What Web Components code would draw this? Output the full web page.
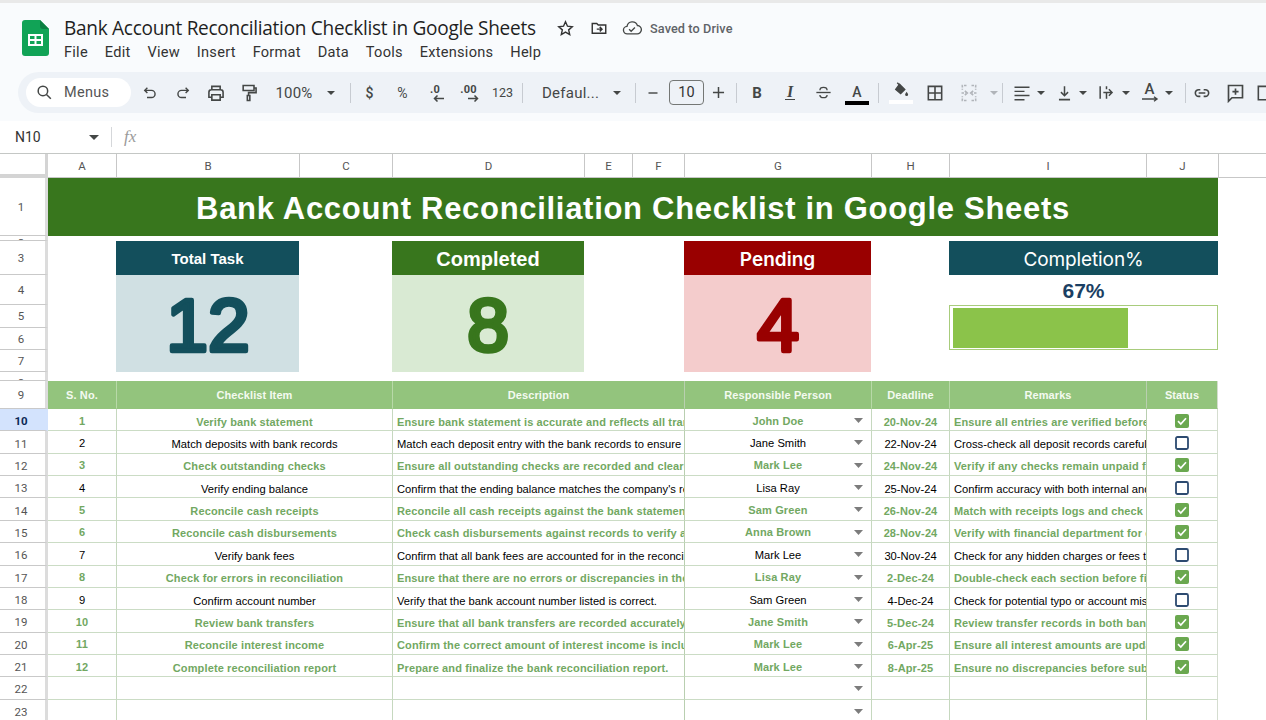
<!DOCTYPE html>
<html lang="en"><head><meta charset="utf-8"><title>Bank Account Reconciliation Checklist in Google Sheets</title>
<style>
html,body{margin:0;padding:0;height:720px;overflow:hidden;background:#fff}
gs-app{font-family:"Roboto","Liberation Sans",sans-serif}
</style></head><body>
<gs-app>
  <gs-header title-text="Bank Account Reconciliation Checklist in Google Sheets"></gs-header>
  <gs-toolbar></gs-toolbar>
  <gs-formula cell="N10"></gs-formula>
  <gs-sheet>
    <gs-banner>Bank Account Reconciliation Checklist in Google Sheets</gs-banner>
    <gs-kpi col="3" label="Total Task" value="12" tone="teal"></gs-kpi>
    <gs-kpi col="5" label="Completed" value="8" tone="green"></gs-kpi>
    <gs-kpi col="8" label="Pending" value="4" tone="red"></gs-kpi>
    <gs-progress label="Completion%" pct="67"></gs-progress>
    <gs-task row="9" head n="S. No." item="Checklist Item" desc="Description" who="Responsible Person" due="Deadline" note="Remarks" status="Status"></gs-task>
    <gs-task row="10" done n="1" item="Verify bank statement" desc="Ensure bank statement is accurate and reflects all tran" who="John Doe" due="20-Nov-24" note="Ensure all entries are verified before"></gs-task>
    <gs-task row="11" n="2" item="Match deposits with bank records" desc="Match each deposit entry with the bank records to ensure a" who="Jane Smith" due="22-Nov-24" note="Cross-check all deposit records careful"></gs-task>
    <gs-task row="12" done n="3" item="Check outstanding checks" desc="Ensure all outstanding checks are recorded and cleare" who="Mark Lee" due="24-Nov-24" note="Verify if any checks remain unpaid fo"></gs-task>
    <gs-task row="13" n="4" item="Verify ending balance" desc="Confirm that the ending balance matches the company's re" who="Lisa Ray" due="25-Nov-24" note="Confirm accuracy with both internal and"></gs-task>
    <gs-task row="14" done n="5" item="Reconcile cash receipts" desc="Reconcile all cash receipts against the bank statement" who="Sam Green" due="26-Nov-24" note="Match with receipts logs and check f"></gs-task>
    <gs-task row="15" done n="6" item="Reconcile cash disbursements" desc="Check cash disbursements against records to verify ac" who="Anna Brown" due="28-Nov-24" note="Verify with financial department for d"></gs-task>
    <gs-task row="16" n="7" item="Verify bank fees" desc="Confirm that all bank fees are accounted for in the reconcil" who="Mark Lee" due="30-Nov-24" note="Check for any hidden charges or fees t"></gs-task>
    <gs-task row="17" done n="8" item="Check for errors in reconciliation" desc="Ensure that there are no errors or discrepancies in the" who="Lisa Ray" due="2-Dec-24" note="Double-check each section before fi"></gs-task>
    <gs-task row="18" n="9" item="Confirm account number" desc="Verify that the bank account number listed is correct." who="Sam Green" due="4-Dec-24" note="Check for potential typo or account mis"></gs-task>
    <gs-task row="19" done n="10" item="Review bank transfers" desc="Ensure that all bank transfers are recorded accurately." who="Jane Smith" due="5-Dec-24" note="Review transfer records in both ban"></gs-task>
    <gs-task row="20" done n="11" item="Reconcile interest income" desc="Confirm the correct amount of interest income is inclu" who="Mark Lee" due="6-Apr-25" note="Ensure all interest amounts are upda"></gs-task>
    <gs-task row="21" done n="12" item="Complete reconciliation report" desc="Prepare and finalize the bank reconciliation report." who="Mark Lee" due="8-Apr-25" note="Ensure no discrepancies before sub"></gs-task>
    <gs-task row="22" blank></gs-task>
    <gs-task row="23" blank></gs-task>
  </gs-sheet>
</gs-app>
<script>
const I = (body, s=18, extra='') => `<svg width="${s}" height="${s}" viewBox="0 0 24 24" fill="none" stroke="#444746" stroke-width="1.9" ${extra}>${body}</svg>`;

class GsApp extends HTMLElement{constructor(){super();this.attachShadow({mode:'open'}).innerHTML=`<style>
:host{display:flex;flex-direction:column;width:1266px;height:720px;overflow:hidden;background:#fff}
</style><slot></slot>`}}

class GsHeader extends HTMLElement{connectedCallback(){
 const menus=['File','Edit','View','Insert','Format','Data','Tools','Extensions','Help'];
 this.attachShadow({mode:'open'}).innerHTML=`<style>
 :host{display:flex;height:72px;flex:none;box-sizing:border-box;background:#f9fbfd;border-top:3px solid #e9e9e9;padding:17px 0 0 22px;color:#1f1f1f}
 .logo{width:27px;height:36px;flex:none}
 .main{margin-left:15px;display:flex;flex-direction:column;margin-top:-5px}
 .top{display:flex;align-items:center;height:26px}
 h1{margin:0;font:400 19.05px/26px "Open Sans","Roboto",sans-serif;letter-spacing:-.28px;white-space:nowrap;width:472px}
 .ic{display:flex;margin-left:15px}
 .saved{margin-left:8px;font:500 12.7px "Roboto",sans-serif;color:#5f6368;letter-spacing:.1px;white-space:nowrap}
 nav{display:flex;gap:16.9px;font:400 14.6px/20px "Roboto",sans-serif;color:#333;margin-top:1px;letter-spacing:.25px}
 </style>
 <svg class="logo" viewBox="0 0 27 36"><path d="M3 0h15l9 9v24a3 3 0 0 1-3 3H3a3 3 0 0 1-3-3V3a3 3 0 0 1 3-3z" fill="#11a356"/><path d="M18 0l9 9h-6a3 3 0 0 1-3-3z" fill="#0c7f42"/><path d="M7 15h13v10H7z" fill="none" stroke="#fff" stroke-width="2"/><path d="M7 20h13M13.5 15v10" stroke="#fff" stroke-width="2"/></svg>
 <div class="main"><div class="top"><h1>${this.getAttribute('title-text')}</h1>
  <span class="ic" style="margin-left:20px">${I('<path d="M12 3.5l2.5 5.6 6 .6-4.5 4 1.3 6L12 16.6 6.700 19.700l1.300-6-4.500-4 6-.6z"/>',19,'style="stroke-width:1.8"').replace('stroke="#444746"','stroke="#333"')}</span>
  <span class="ic">${I('<path d="M3 6h6l2 2h10v11H3z"/><path d="M9 13.500h7M13 10.500l3 3-3 3"/>',18).replace('stroke="#444746"','stroke="#333"')}</span>
  <span class="ic" style="margin-left:14px">${I('<path d="M6.500 19A4.500 4.500 0 0 1 6 10a6.500 6.500 0 0 1 12.500-1A5 5 0 0 1 18 19z"/><path d="M8.500 13.500l2.500 2.500 4.500-4.500"/>',20,'style="stroke-width:1.600"')}</span>
  <span class="saved">Saved to Drive</span></div>
  <nav>${menus.map(m=>`<span>${m}</span>`).join('')}</nav></div>`;
}}

class TbItem extends HTMLElement{connectedCallback(){
 this.attachShadow({mode:'open'}).innerHTML=`<style>
 :host{display:flex;align-items:center;justify-content:center;flex:none;height:41px;position:relative;color:#444746;font:400 14px "Roboto",sans-serif}
 </style><slot></slot>`;
 this.style.width=this.getAttribute('w')+'px';
}}

class GsToolbar extends HTMLElement{connectedCallback(){
 const caret='<svg width="8" height="4" viewBox="0 0 10 5" preserveAspectRatio="none"><path d="M0 0h10L5 5z" fill="#444746"/></svg>';
 const item=(w,h='',st='')=>`<tb-item w="${w}" style="${st}">${h}</tb-item>`;
 const sep=(l=0)=>`<span class="sep" style="margin-left:${l}px"></span>`;
 this.attachShadow({mode:'open'}).innerHTML=`<style>
 :host{display:block;height:49px;box-sizing:border-box;background:#f9fbfd;padding:0 0 8px 18px;overflow:hidden;flex:none}
 .pill{display:flex;align-items:center;height:41px;width:1300px;background:#eef2f7;border-radius:21px 0 0 21px}
 .menus{display:flex;align-items:center;margin-left:8px;width:105px;height:29px;background:#fff;border-radius:15px;flex:none;font:400 14.500px "Roboto",sans-serif;color:#555;letter-spacing:.3px;box-sizing:border-box;padding-left:9px;gap:10px}
 .sep{width:1px;height:20px;background:#c7cbd1;flex:none}
 .t{font:400 15px "Roboto",sans-serif;color:#444746;white-space:nowrap}
 .s{font:400 12.500px "Roboto",sans-serif;color:#444746;white-space:nowrap}
 .b{font:500 14px "Roboto",sans-serif;color:#444746}
 .col{display:flex;flex-direction:column;align-items:center;line-height:1}
 .dec{font:700 11px/11px "Roboto",sans-serif;color:#444746;letter-spacing:.2px}
 .box{width:35px;height:25px;box-sizing:border-box;border:1px solid #747775;border-radius:4px;display:flex;align-items:center;justify-content:center;font:400 14.500px "Roboto",sans-serif;color:#333}
 .bar{width:24px;height:4px;background:#000;margin-top:1px}
 .wbar{width:24px;height:4px;background:#fff;margin-top:0}
 .a{font:500 14px/15px "Roboto",sans-serif;color:#444746}
 </style><div class="pill">
 <div class="menus">${I('<circle cx="10" cy="10" r="6"/><path d="M14.500 14.500L20 20"/>',19)}<span>Menus</span></div>
 ${item(2)}
 ${item(33,I('<path d="M8.500 5L5 8.500 8.500 12"/><path d="M5 8.500h9a4.500 4.500 0 0 1 0 9.500H8"/>',18))}
 ${item(33,I('<path d="M15.500 5L19 8.500 15.500 12"/><path d="M19 8.500h-9a4.500 4.500 0 0 0 0 9.500h6"/>',18))}
 ${item(33,I('<path d="M7 8V4h10v4M7 17H3.500v-6a3 3 0 0 1 3-3h11a3 3 0 0 1 3 3v6H17M7 14h10v6.500H7z"/>',20))}
 ${item(33,I('<path d="M5 3h13v6H5zM18 6h2.500v5.500H11.500V15M10 15h3v6h-3z"/>',20))}
 ${item(58,'<span class="t" style="letter-spacing:.2px">100%</span>')}
 ${item(12,caret,'margin-left:2px')}
 ${item(13)}${sep()}
 ${item(37,'<span class="t" style="font-weight:500;font-size:14px">$</span>')}
 ${item(29,'<span class="s" style="font-size:14px">%</span>')}
 ${item(36,'<span class="col"><span class="dec">.0</span><svg width="12" height="7" viewBox="0 0 12 7" style="margin-left:8px"><path d="M11 3.500H2M4.500 .5L1.500 3.500l3 3" fill="none" stroke="#444746" stroke-width="1.500"/></svg></span>')}
 ${item(31,'<span class="col"><span class="dec">.00</span><svg width="12" height="7" viewBox="0 0 12 7" style="margin-left:8px"><path d="M1 3.500h9M7.500 .5l3 3-3 3" fill="none" stroke="#444746" stroke-width="1.500"/></svg></span>')}
 ${item(37,'<span class="s">123</span>')}
 ${item(1)}${sep()}
 ${item(85,'<span class="t" style="letter-spacing:.25px">Defaul...</span>','justify-content:flex-start;padding-left:19px;box-sizing:border-box')}
 ${item(18,caret)}
 ${item(9)}${sep()}
 ${item(33,I('<path d="M6 12h12"/>',18))}
 <tb-item w="35"><span class="box">10</span></tb-item>
 ${item(28,I('<path d="M5 12h14M12 5v14"/>',19))}
 ${item(4)}${sep()}
 ${item(40,'<span class="b" style="font-weight:700;font-size:15px">B</span>')}
 ${item(26,'<span class="b" style="font-style:italic;font-size:16px;font-family:\'Liberation Serif\',serif;font-weight:700;border-bottom:1.500px solid #444746;line-height:14px;padding:0 2px">I</span>')}
 ${item(40,I('<path d="M3 12h18"/><path d="M16.500 9c0-2-2-3.500-4.500-3.500S7.500 7 7.500 9M7.500 15c0 2 2 3.500 4.500 3.500s4.500-1.500 4.500-3.500"/>',19,'style="stroke-width:1.700"'))}
 ${item(28,'<span class="col" style="padding-top:4px"><span class="a">A</span><span class="bar"></span></span>')}
 ${item(7)}${sep()}
 ${item(43,'<span class="col">'+I('<path d="M10 3l7 7-5.500 5.500L5 10z" fill="#444746"/><path d="M7 1l4 4"/><path d="M19.500 13c-1.200 1.800-2 2.800-2 3.800a2 2 0 0 0 4 0c0-1-.8-2-2-3.800z" fill="#444746" stroke="none"/>',18)+'<span class="wbar"></span></span>')}
 ${item(26,I('<path d="M4 4h16v16H4zM12 4v16M4 12h16"/>',20))}
 ${item(42,I('<path d="M9 3H4v5M15 3h5v5M9 21H4v-5M15 21h5v-5M3 12h6M21 12h-6" stroke-dasharray="3 1.500"/><path d="M7 9.500L10 12 7 14.500M17 9.500L14 12l3 2.500"/>',20).replace('#444746','#b0b4b9'))}
 ${item(8,caret.replace('#444746','#b0b4b9'))}
 ${item(4)}${sep()}
 ${item(5)}
 ${item(28,I('<path d="M3 5h18M3 10h12M3 15h18M3 20h12"/>',20,'style="stroke-width:1.700"'))}
 ${item(9,caret)}
 ${item(4)}
 ${item(30,I('<path d="M5 21h14M12 4v12M7.500 11.500L12 16l4.500-4.500"/>',19))}
 ${item(8,caret)}
 ${item(4)}
 ${item(30,I('<path d="M4 4v16M12 4v4M12 12v8M8 12h11M15 8l4 4-4 4"/>',19))}
 ${item(10,caret)}
 ${item(3.5)}
 ${item(30,'<span class="col"><span class="a" style="line-height:13px;font-size:15px">A</span><svg width="20" height="6" viewBox="0 0 20 6"><path d="M2 3h15M14 .8L17 3l-3 2.200" fill="none" stroke="#444746" stroke-width="1.400"/></svg></span>')}
 ${item(8,caret)}
 ${item(12)}${sep()}
 ${item(33,I('<path d="M10 8H8a4 4 0 0 0 0 8h2M14 8h2a4 4 0 0 1 0 8h-2M8 12h8"/>',20))}
 ${item(33,I('<path d="M4 4h16v14H8l-4 4zM12 7.500v7M8.500 11h7"/>',21))}
 ${item(26,I('<path d="M4 4h16v16H4z"/>',20))}
 </div>`;
}}

class GsFormula extends HTMLElement{connectedCallback(){
 this.attachShadow({mode:'open'}).innerHTML=`<style>
 :host{display:flex;align-items:center;height:32px;background:#fff;flex:none;font:400 14px "Roboto",sans-serif;color:#333;padding-left:15px;box-sizing:border-box}
 .n{width:74px}.sep{width:1px;height:20px;background:#d5d7da;margin:0 12px}
 i{font:italic 400 17px "Liberation Serif",serif;color:#9a9a9a}
 </style><span class="n">${this.getAttribute('cell')}</span><svg width="10" height="5" viewBox="0 0 10 5"><path d="M0 0h10L5 5z" fill="#444746"/></svg><span class="sep"></span><i>fx</i>`;
}}

const COLS=['A','B','C','D','E','F','G','H','I','J'];
class GsSheet extends HTMLElement{connectedCallback(){
 const heads=COLS.map((c,i)=>`<div class="ch" style="grid-column:${i+2};grid-row:1">${c}</div>`).join('');
 let rows='';for(let r=1;r<=23;r++){
  const st=r===2?'align-items:flex-start;padding-top:1px':r===8?'align-items:flex-start;padding-top:5px':'padding-top:'+(r>=10?3:0)+'px';
  rows+=`<div class="rh${r===10?' sel':''}" style="grid-row:${r+1};${st}"><span>${r}</span></div>`;}
 this.attachShadow({mode:'open'}).innerHTML=`<style>
 :host{display:grid;flex:none;height:567px;overflow:hidden;background:#fff;border-top:1px solid #c4c7c5;box-sizing:border-box;
  grid-template-columns:48px 68px 183px 93px 192px 48px 52px 187px 78px 197px 72px 1fr;
  grid-template-rows:24px 58px 5px 34px 30px 23px 22px 22px 9px 28px repeat(14,22.36px);
  font-family:"Liberation Sans",Arial,sans-serif}
 .corner{grid-column:1;grid-row:1;background:#fff;border-right:3px solid #d4d4d4;border-bottom:4px solid #d4d4d4;box-sizing:border-box}
 .ch{display:flex;align-items:center;justify-content:center;font:400 11.500px "Roboto",sans-serif;color:#555;border-left:1px solid #c7c7c7;box-sizing:border-box;border-bottom:1px solid #c7c7c7}
 .ch:nth-of-type(2){border-left:0}
 .tail{grid-column:12;grid-row:1;border-bottom:1px solid #c7c7c7;border-left:1px solid #c7c7c7}
 .rh{grid-column:1;display:flex;align-items:center;justify-content:center;overflow:hidden;font:400 11.500px/12px "Roboto",sans-serif;color:#555;border-right:3px solid #dcdcdc;border-bottom:1px solid #c9c9c9;box-sizing:border-box;padding-right:3px}
 .rh.sel{background:#d3e3fd;color:#0b2a55;font-weight:700;border-right-color:#d3e3fd}
 </style><div class="corner"></div>${heads}<div class="tail"></div>${rows}<slot></slot>`;
}}

class GsBanner extends HTMLElement{connectedCallback(){
 this.attachShadow({mode:'open'}).innerHTML=`<style>
 :host{grid-column:2/12;grid-row:2;display:flex;align-items:center;justify-content:center;box-sizing:border-box;padding-top:3px;background:#38761d;color:#fff;font:700 31px "Liberation Sans",Arial,sans-serif;letter-spacing:.7px;white-space:nowrap}
 </style><slot></slot>`;
}}

const TONES={teal:['#134f5c','#d0e0e3',15,'Liberation Sans',700,0],green:['#38761d','#d9ead3',20,'Liberation Sans',700,3],red:['#990000','#f4cccc',19,'Inter',600,3]};
class GsKpi extends HTMLElement{connectedCallback(){
 const [d,l,fs,ff,fw,pt]=TONES[this.getAttribute('tone')];
 const c=this.getAttribute('col'),v=this.getAttribute('value');
 this.attachShadow({mode:'open'}).innerHTML=`<style>
 :host{display:contents}
 .h{grid-column:${c};grid-row:4;background:${d};color:#fff;display:flex;align-items:center;justify-content:center;box-sizing:border-box;padding-top:${pt}px;font:${fw} ${fs}px "${ff}",sans-serif}
 .v{grid-column:${c};grid-row:5/9;background:${l};display:flex;align-items:center;justify-content:center}
 svg{display:block}
 text{font:400 75px "Liberation Sans",sans-serif;fill:${d};stroke:${d};stroke-width:4.5px;stroke-linejoin:round;stroke-linecap:round;text-anchor:middle}
 </style><div class="h">${this.getAttribute('label')}</div><div class="v"><svg width="120" height="97" viewBox="0 0 120 97"><text x="60" y="76">${v}</text></svg></div>`;
}}

class GsProgress extends HTMLElement{connectedCallback(){
 const p=this.getAttribute('pct');
 this.attachShadow({mode:'open'}).innerHTML=`<style>
 :host{display:contents}
 .h{grid-column:10/12;grid-row:4;background:#134f5c;color:#fff;display:flex;align-items:center;justify-content:center;box-sizing:border-box;padding-top:2px;font:400 19px "Inter",sans-serif;letter-spacing:-.1px}
 .p{grid-column:10/12;grid-row:5;display:flex;align-items:center;justify-content:center;box-sizing:border-box;padding-top:2px;font:700 21px "Liberation Sans",sans-serif;color:#1b3f63}
 .t{grid-column:10/12;grid-row:6/8;border:1px solid #a8cc7c;padding:2px 3px 1px;box-sizing:border-box;background:#fff}
 .f{height:100%;width:${p}%;background:#8bc34a}
 </style><div class="h">${this.getAttribute('label')}</div><div class="p">${p}%</div><div class="t"><div class="f"></div></div>`;
}}

class GsCheck extends HTMLElement{connectedCallback(){
 const on=this.hasAttribute('on');
 this.attachShadow({mode:'open'}).innerHTML=`<style>
 :host{display:block;width:14px;height:14px;flex:none}
 svg{display:block}</style>
 <svg width="14" height="14" viewBox="0 0 14 14">${on?
  '<rect width="14" height="14" rx="2" fill="#6aa84f"/><path d="M3 7.200L5.800 10 11 4.200" fill="none" stroke="#fff" stroke-width="1.700"/>':
  '<rect x="1" y="1" width="12" height="12" rx="1.500" fill="#fff" stroke="#2c4a70" stroke-width="1.800"/>'}</svg>`;
}}

class GsTask extends HTMLElement{connectedCallback(){
 const a=k=>this.getAttribute(k)||'';
 const r=+a('row')+1, head=this.hasAttribute('head'), done=this.hasAttribute('done'), blank=this.hasAttribute('blank');
 const cls=head?'head':done?'done':'';
 const cell=(col,c,txt)=>`<div class="c ${c}" style="grid-column:${col};grid-row:${r}">${txt}</div>`;
 const caret=head?'':'<svg class="dd" width="9" height="5" viewBox="0 0 9 5"><path d="M0 0h9L4.500 5z" fill="#7c7c7c"/></svg>';
 const check=head?a('status'):blank?'':`<gs-check ${done?'on':''}></gs-check>`;
 this.attachShadow({mode:'open'}).innerHTML=`<style>
 :host{display:contents}
 .c{box-sizing:border-box;border-left:1px solid #c6d8bf;border-bottom:1px solid #cbdcc5;display:flex;align-items:center;overflow:hidden;white-space:nowrap;font:400 11.2px "Liberation Sans",Arial,sans-serif;color:#000;padding-top:4px;position:relative;min-width:0}
 .ctr{justify-content:center}
 .up{padding-top:2px}
 .l{padding-left:4px}
 .first{border-left:0}
 .done{font-weight:700;font-size:11px;color:#72a862;letter-spacing:.13px}
 .head{background:#93c47d;color:#f4faf0;font-weight:700;font-size:11px;justify-content:center;padding:0;border-left-color:#b8d9a8;border-bottom-color:#93c47d;letter-spacing:.1px}
 .strong{border-left-color:#b9cfb0}
 .end{border-right:1px solid #d5ddd0;border-left-color:#b9cfb0}
 .dd{position:absolute;right:8px;top:9px}
 </style>
 ${cell(2,'first ctr up '+cls,a('n'))}
 ${cell('3/5','ctr '+cls,a('item'))}
 ${cell('5/8','l '+cls,a('desc'))}
 ${cell(8,'strong ctr up '+cls,a('who')+caret)}
 ${cell(9,'ctr '+cls,a('due'))}
 ${cell(10,'l '+cls,a('note'))}
 ${cell(11,'ctr up end '+cls,check)}`;
}}

customElements.define('gs-app',GsApp);
customElements.define('gs-header',GsHeader);
customElements.define('tb-item',TbItem);
customElements.define('gs-toolbar',GsToolbar);
customElements.define('gs-formula',GsFormula);
customElements.define('gs-sheet',GsSheet);
customElements.define('gs-banner',GsBanner);
customElements.define('gs-kpi',GsKpi);
customElements.define('gs-progress',GsProgress);
customElements.define('gs-check',GsCheck);
customElements.define('gs-task',GsTask);
</script>
</body></html>
